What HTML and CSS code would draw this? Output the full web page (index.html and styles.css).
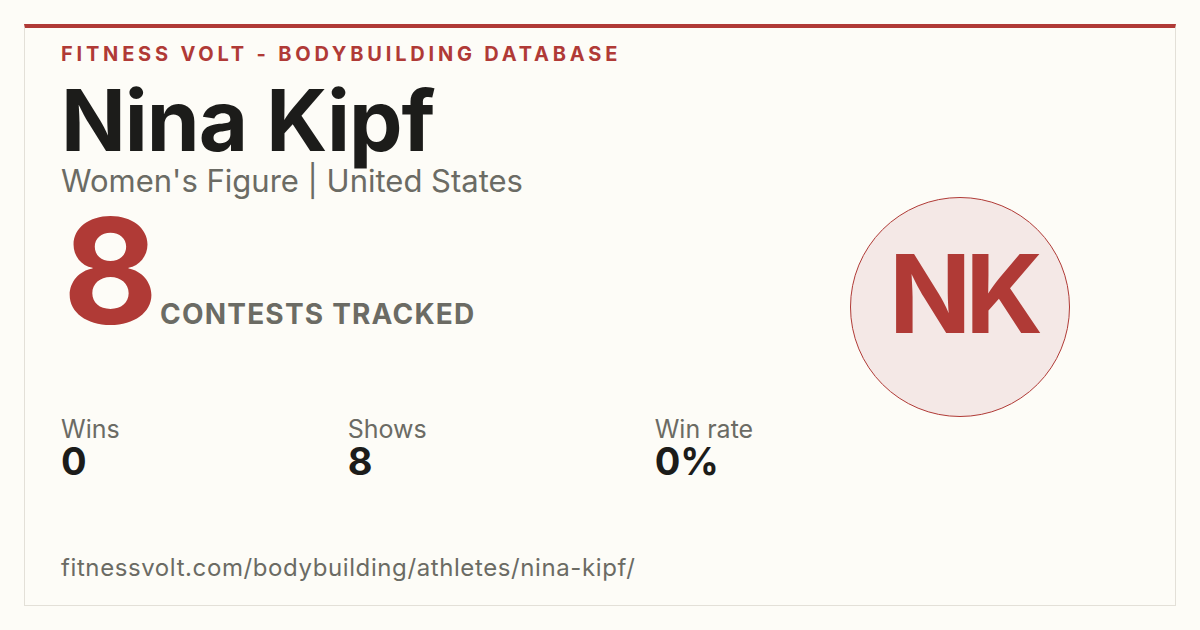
FILE: index.html
```html
<!DOCTYPE html>
<html lang="en">
<head>
<meta charset="utf-8">
<title>Nina Kipf - Fitness Volt</title>
<link rel="stylesheet" href="styles.css">
</head>
<body>
<main class="card">
  <section class="main">
    <div class="brand">FITNESS VOLT - BODYBUILDING DATABASE</div>
    <h1 class="name">Nina Kipf</h1>
    <div class="sub">Women's Figure | United States</div>
    <div class="count">
      <span class="count-num">8</span>
      <span class="count-label">CONTESTS TRACKED</span>
    </div>
    <div class="stats">
      <div class="stat stat-wins">
        <div class="stat-label">Wins</div>
        <div class="stat-value">0</div>
      </div>
      <div class="stat stat-shows">
        <div class="stat-label">Shows</div>
        <div class="stat-value">8</div>
      </div>
      <div class="stat">
        <div class="stat-label">Win rate</div>
        <div class="stat-value">0%</div>
      </div>
    </div>
    <div class="url">fitnessvolt.com/bodybuilding/athletes/nina-kipf/</div>
  </section>
  <aside class="aside">
    <div class="avatar"><span class="initials">NK</span></div>
  </aside>
</main>
</body>
</html>
```
FILE: styles.css
```css
html, body {
  margin: 0;
  padding: 0;
  background: #fdfcf7;
}
body {
  padding: 24px;
  font-family: Inter, "Open Sans", sans-serif;
  color: #1c1c1a;
}
.card {
  box-sizing: border-box;
  width: 1152px;
  height: 582px;
  border: 1px solid #e3e0d8;
  border-top: 4px solid #b03a36;
  background: #fdfcf7;
  padding: 14px 36px 22px 36px;
  display: flex;
}
.main {
  flex: 1;
  display: flex;
  flex-direction: column;
}
.brand {
  font-size: 20px;
  line-height: 24px;
  font-weight: 700;
  letter-spacing: 3.8px;
  color: #b03a36;
}
.name {
  margin: 12px 0 0 0;
  font-size: 85px;
  line-height: 85px;
  font-weight: 700;
  letter-spacing: -1px;
  color: #1c1c1a;
}
.sub {
  font-size: 31px;
  line-height: 36px;
  color: #6b6b64;
}
.count {
  margin-top: 7px;
  height: 130px;
  display: flex;
  align-items: baseline;
  gap: 4px;
}
.count-num {
  font-size: 146px;
  line-height: 130px;
  font-weight: 700;
  color: #b03a36;
  letter-spacing: -2px;
  margin-left: 2px;
}
.count-label {
  font-size: 28px;
  font-weight: 700;
  letter-spacing: 1.2px;
  color: #6b6b64;
}
.stats {
  margin-top: 78px;
  display: flex;
  gap: 228px;
}
.stat-label {
  font-size: 25px;
  line-height: 30px;
  color: #6b6b64;
}
.stat-value {
  font-size: 38px;
  line-height: 34px;
  font-weight: 700;
  color: #1c1c1a;
}
.url {
  margin-top: 75px;
  font-size: 24px;
  line-height: 30px;
  letter-spacing: 0.6px;
  color: #6b6b64;
}
.aside {
  width: 220px;
  margin-top: 155px;
  margin-right: 69px;
  align-self: flex-start;
}
.avatar {
  box-sizing: border-box;
  width: 220px;
  height: 220px;
  border-radius: 50%;
  border: 1.5px solid #b03a36;
  background: #f4e8e6;
  display: flex;
  align-items: center;
  justify-content: center;
}
.initials {
  font-size: 108px;
  line-height: 108px;
  font-weight: 700;
  color: #b03a36;
  margin-bottom: 26px;
  letter-spacing: -6px;
  margin-left: 6px;
}
```
